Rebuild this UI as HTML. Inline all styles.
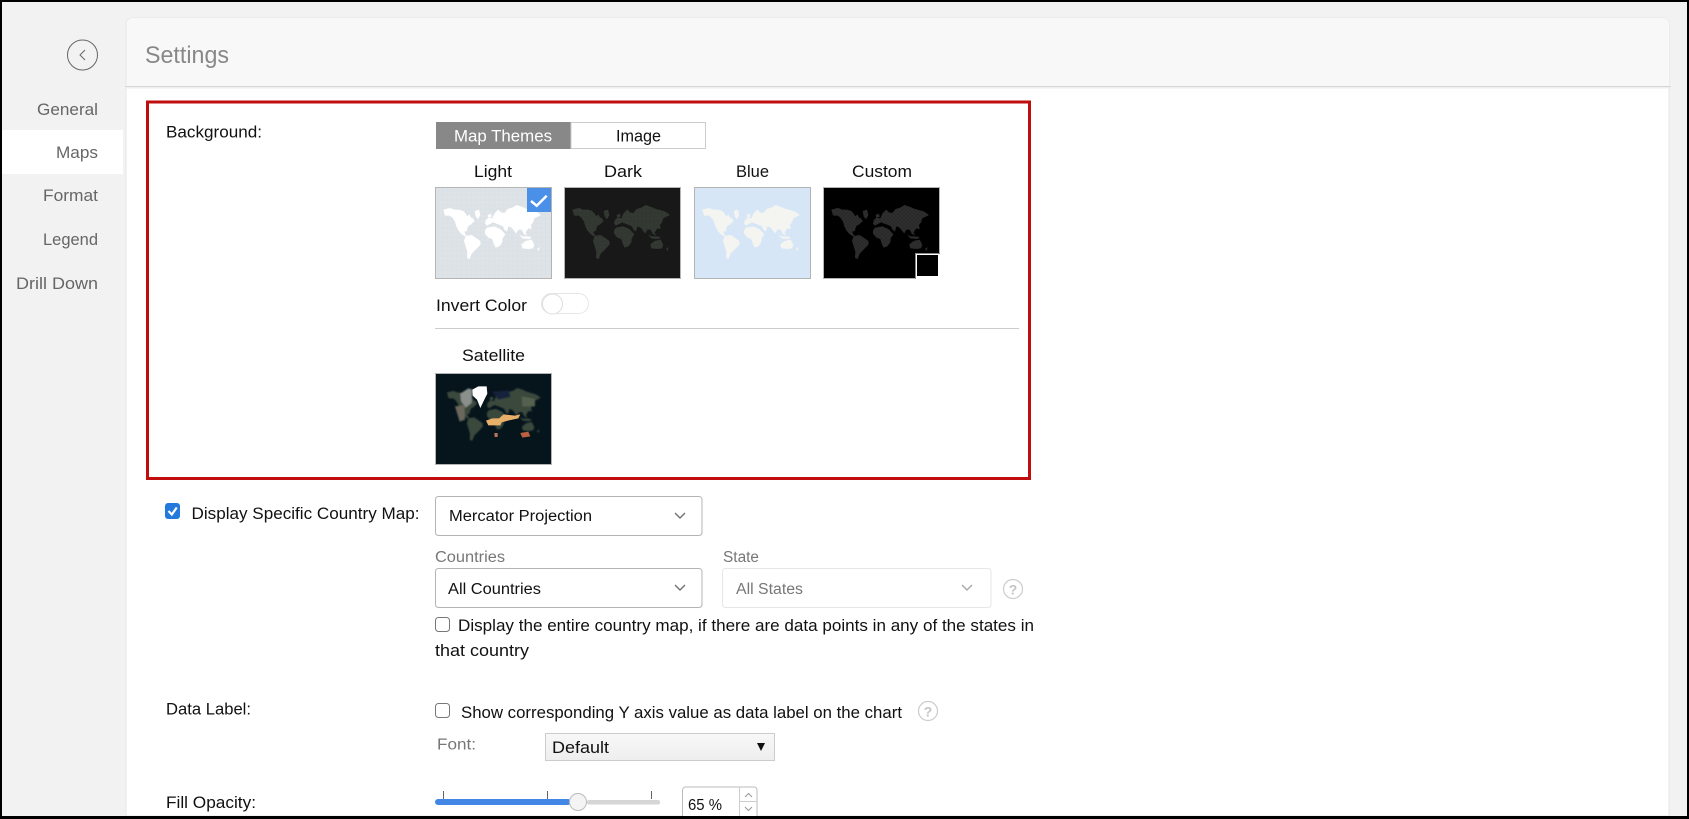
<!DOCTYPE html>
<html lang="en"><head><meta charset="utf-8"><title>Settings</title>
<style>
html,body{margin:0;padding:0;background:#000;overflow:hidden;width:1689px;height:819px}
svg{display:block}
text{font-family:"Liberation Sans",sans-serif;font-size:16.5px;fill:#111}
.s{fill:#666;font-size:17px}
.g{fill:#777;font-size:15.5px}
</style></head><body>
<svg width="1689" height="819" viewBox="0 0 1689 819" xmlns="http://www.w3.org/2000/svg">
<defs>
<g id="land">
<path d="M25,68 L32,66 L45,63 L58,68 L72,68 L85,72 L92,80 L97,88 L103,82 L108,92 L114,94 L119,103 L112,108 L108,113 L101,116 L97,124 L96,132 L88,134 L91,142 L96,148 L88,147 L78,140 L70,130 L64,118 L60,104 L52,92 L44,86 L30,86 Z"/>
<path d="M119,72 L132,68 L136,84 L129,97 L122,88 Z"/>
<path d="M92,147 L110,144 L122,152 L136,162 L137,172 L128,182 L118,192 L110,200 L104,216 L96,213 L97,194 L92,178 L87,162 Z"/>
<path d="M156,122 L178,118 L196,126 L206,136 L211,142 L203,154 L202,166 L193,178 L182,182 L176,170 L172,156 L160,152 L150,140 L150,130 Z"/>
<path d="M152,100 L160,92 L172,94 L178,80 L190,68 L198,76 L208,78 L218,66 L232,62 L245,54 L262,60 L276,66 L292,70 L304,74 L318,84 L306,90 L298,94 L294,106 L288,114 L290,126 L280,124 L272,136 L276,146 L266,140 L260,128 L250,128 L244,140 L236,130 L230,122 L220,118 L216,134 L208,128 L204,118 L190,112 L174,106 L156,116 L150,110 Z"/>
<path d="M259,172 L272,162 L280,160 L290,158 L298,174 L294,184 L280,186 L262,184 Z"/>
<path d="M252,142 L262,148 L276,148 L290,150 L284,156 L262,154 Z"/>
<path d="M306,186 L314,180 L311,192 Z"/>
<path d="M158,84 L168,80 L170,90 L160,92 Z"/>
</g>
<pattern id="dd" width="8" height="8" patternUnits="userSpaceOnUse"><circle cx="2" cy="2" r="1" fill="#4c584a"/><circle cx="6" cy="6" r="1" fill="#4c584a"/></pattern>
<pattern id="dc" width="12" height="12" patternUnits="userSpaceOnUse"><circle cx="3" cy="3" r="1.6" fill="#181818"/><circle cx="9" cy="9" r="1.6" fill="#181818"/></pattern>
<pattern id="dl" width="14" height="14" patternUnits="userSpaceOnUse"><circle cx="3" cy="4" r="1.5" fill="#eef1f4"/><circle cx="10" cy="11" r="1.5" fill="#cfd8e6"/></pattern>
<linearGradient id="nat" x1="0" y1="0" x2="0" y2="1"><stop offset="0" stop-color="#f8f8f8"/><stop offset="1" stop-color="#eeeeee"/></linearGradient>
<filter id="bl" x="-10%" y="-10%" width="120%" height="120%"><feGaussianBlur stdDeviation="2.400"/></filter>
<filter id="bs" x="-10%" y="-10%" width="120%" height="120%"><feGaussianBlur stdDeviation="1"/></filter>
</defs>

<!-- frame + page bg -->
<rect x="0" y="0" width="1689" height="819" fill="#000"/>
<rect x="2" y="2" width="1685" height="814" fill="#f2f2f2"/>

<!-- sidebar -->
<rect x="2" y="130" width="121" height="44" fill="#fff"/>
<circle cx="82.5" cy="55" r="15" fill="none" stroke="#666" stroke-width="1"/>
<polyline points="85,50 80,55 85,60" fill="none" stroke="#666" stroke-width="1"/>
<text class="s" x="37" y="115" textLength="61" lengthAdjust="spacingAndGlyphs">General</text>
<text class="s" x="56" y="158" textLength="42" lengthAdjust="spacingAndGlyphs">Maps</text>
<text class="s" x="43" y="201" textLength="55" lengthAdjust="spacingAndGlyphs">Format</text>
<text class="s" x="43" y="245" textLength="55" lengthAdjust="spacingAndGlyphs">Legend</text>
<text class="s" x="16" y="289" textLength="82" lengthAdjust="spacingAndGlyphs">Drill Down</text>

<!-- card -->
<path d="M126,816 V24 a6,6 0 0 1 6,-6 H1663 a6,6 0 0 1 6,6 V816 Z" fill="#fff" stroke="#e6e6e6" stroke-width="1"/>
<path d="M126.500,86 V24 a6,6 0 0 1 6,-6 H1663 a6,6 0 0 1 6,6 V86 Z" fill="#f8f8f8"/>
<rect x="125" y="86" width="1546" height="1" fill="#d6d6d6"/>
<rect x="125" y="87" width="1546" height="1.500" fill="#eeeeee"/>
<text x="145" y="63" style="fill:#888;font-size:24px" textLength="84" lengthAdjust="spacingAndGlyphs">Settings</text>

<!-- red box -->
<rect x="147.500" y="102" width="882" height="376.500" fill="#fff" stroke="#c00d0d" stroke-width="3"/>

<text x="166" y="137.500" textLength="96" lengthAdjust="spacingAndGlyphs">Background:</text>

<!-- tabs -->
<rect x="436" y="122" width="135" height="27" fill="#888"/>
<rect x="571" y="122.500" width="134.500" height="26" fill="#fff" stroke="#ccc"/>
<text x="454" y="141.500" style="fill:#fff" textLength="98" lengthAdjust="spacingAndGlyphs">Map Themes</text>
<text x="616" y="141.500" textLength="45" lengthAdjust="spacingAndGlyphs">Image</text>

<text x="474" y="177" textLength="38" lengthAdjust="spacingAndGlyphs">Light</text>
<text x="604" y="177" textLength="38" lengthAdjust="spacingAndGlyphs">Dark</text>
<text x="736" y="177" textLength="33" lengthAdjust="spacingAndGlyphs">Blue</text>
<text x="852" y="177" textLength="60" lengthAdjust="spacingAndGlyphs">Custom</text>

<!-- Light -->
<rect x="435.500" y="187.500" width="116" height="91" fill="#dde2e7" stroke="#b4b4b4"/>
<g transform="translate(435,187) scale(.3333)"><rect x="3" y="3" width="345" height="270" fill="url(#dl)" opacity=".6"/><use href="#land" fill="#fff"/></g>
<rect x="527" y="188" width="24" height="24" fill="#4a90e8"/>
<polyline points="531,201 536.700,205.700 546.700,195.700" fill="none" stroke="#fff" stroke-width="2.500"/>

<!-- Dark -->
<rect x="564.500" y="187.500" width="116" height="91" fill="#181818" stroke="#b4b4b4"/>
<g transform="translate(564,187) scale(.3333)"><use href="#land" fill="#30352f"/><use href="#land" fill="url(#dd)"/></g>

<!-- Blue -->
<rect x="694.500" y="187.500" width="116" height="91" fill="#d6e6f7" stroke="#b4b4b4"/>
<g transform="translate(694,187) scale(.3333)"><use href="#land" fill="#f4f4f0"/></g>

<!-- Custom -->
<rect x="823.500" y="187.500" width="116" height="91" fill="#000" stroke="#b4b4b4"/>
<g transform="translate(823,187) scale(.3333)"><use href="#land" fill="#2e2e2e"/><use href="#land" fill="url(#dc)"/></g>
<rect x="915" y="253" width="25" height="26" fill="#fff"/>
<rect x="915" y="253" width="1" height="26" fill="#888"/>
<rect x="915" y="253" width="25" height="1" fill="#888"/>
<rect x="917" y="255" width="21" height="21" fill="#000"/>

<!-- Invert -->
<text x="436" y="311" textLength="91" lengthAdjust="spacingAndGlyphs">Invert Color</text>
<rect x="541.500" y="293.500" width="47" height="20" rx="10" fill="#fff" stroke="#e6e6e6"/>
<circle cx="552.500" cy="304" r="10" fill="#fff" stroke="#dcdcdc"/>
<rect x="435" y="328" width="584" height="1" fill="#ccc"/>

<!-- Satellite -->
<text x="462" y="361" textLength="63" lengthAdjust="spacingAndGlyphs">Satellite</text>
<rect x="435.500" y="373.500" width="116" height="91" fill="#06141c" stroke="#b4b4b4"/>
<g transform="translate(435,373) scale(.3333)">
<g filter="url(#bl)">
<use href="#land" fill="#3a4a3c" transform="translate(12,-8) scale(.96,.98)"/>
<path d="M76,62 L100,46 L112,50 L110,90 L92,104 L78,84 Z" fill="#8b908c"/>
<path d="M60,100 L88,96 L90,140 L74,146 Z" fill="#6b685c"/>
<path d="M172,56 L222,52 L226,72 L190,80 Z" fill="#16223a"/>
<path d="M260,70 L300,78 L300,100 L262,100 Z" fill="#55604f"/>
</g>
<g filter="url(#bs)">
<path d="M112,50 L130,40 L155,40 L157,62 L146,84 L136,105 L126,80 L113,68 Z" fill="#fff"/>
<path d="M153,143 L172,136 L192,136 L206,124 L240,128 L256,124 L250,136 L222,142 L200,148 L196,157 L160,157 Z" fill="#e9b06a"/>
<path d="M178,180 L188,180 L188,192 L179,192 Z" fill="#b97358"/>
<path d="M256,180 L280,176 L286,190 L262,194 Z" fill="#bb6040"/>
</g>
</g>

<!-- Display Specific -->
<rect x="165" y="503" width="15" height="16" rx="3" fill="#2479dc"/>
<polyline points="168.500,511 171.800,514.500 176.800,507.500" fill="none" stroke="#fff" stroke-width="2.200"/>
<text x="191.500" y="519" textLength="228" lengthAdjust="spacingAndGlyphs">Display Specific Country Map:</text>

<rect x="435.500" y="496.500" width="266.500" height="39" rx="3" fill="#fff" stroke="#b4b4b4"/>
<text x="449" y="521" style="font-size:15.500px" textLength="143" lengthAdjust="spacingAndGlyphs">Mercator Projection</text>
<polyline points="675,513 680,518 685,513" fill="none" stroke="#777" stroke-width="1.500"/>

<text class="g" x="435" y="562" textLength="70" lengthAdjust="spacingAndGlyphs">Countries</text>
<rect x="435.500" y="568.500" width="266.500" height="39" rx="3" fill="#fff" stroke="#b4b4b4"/>
<text x="448" y="594" style="font-size:15.500px" textLength="93" lengthAdjust="spacingAndGlyphs">All Countries</text>
<polyline points="675,585 680,590 685,585" fill="none" stroke="#777" stroke-width="1.500"/>

<text class="g" x="723" y="562" textLength="36" lengthAdjust="spacingAndGlyphs">State</text>
<rect x="722.500" y="568.500" width="268.500" height="39" rx="3" fill="#fff" stroke="#e6e6e6"/>
<text x="736" y="594" style="font-size:15.500px;fill:#777" textLength="67" lengthAdjust="spacingAndGlyphs">All States</text>
<polyline points="962,585 967,590 972,585" fill="none" stroke="#aaa" stroke-width="1.500"/>

<circle cx="1013" cy="589" r="9.500" fill="#fff" stroke="#ccc" stroke-width="1.200"/>
<text x="1013" y="594.500" text-anchor="middle" style="font-size:14px;font-weight:bold;fill:#c4c4c4">?</text>

<rect x="435.500" y="617.500" width="14" height="14" rx="3" fill="#fff" stroke="#777"/>
<text x="458" y="631" textLength="576" lengthAdjust="spacingAndGlyphs">Display the entire country map, if there are data points in any of the states in</text>
<text x="435" y="656" textLength="94" lengthAdjust="spacingAndGlyphs">that country</text>

<!-- Data Label -->
<text x="166" y="714.500" textLength="85" lengthAdjust="spacingAndGlyphs">Data Label:</text>
<rect x="435.500" y="703.500" width="14" height="14" rx="3" fill="#fff" stroke="#777"/>
<text x="461" y="718" textLength="441" lengthAdjust="spacingAndGlyphs">Show corresponding Y axis value as data label on the chart</text>
<circle cx="928" cy="711" r="9.500" fill="#fff" stroke="#ccc" stroke-width="1.200"/>
<text x="928" y="716.500" text-anchor="middle" style="font-size:14px;font-weight:bold;fill:#c4c4c4">?</text>

<text class="g" x="437" y="749.500" textLength="39" lengthAdjust="spacingAndGlyphs">Font:</text>
<rect x="545.500" y="733.500" width="229" height="27" fill="url(#nat)" stroke="#ccc"/>
<text x="552" y="753" textLength="57" lengthAdjust="spacingAndGlyphs">Default</text>
<polygon points="757,743 765,743 761,751" fill="#111"/>

<!-- Fill Opacity -->
<text x="166" y="808" textLength="90" lengthAdjust="spacingAndGlyphs">Fill Opacity:</text>
<rect x="587" y="800" width="73" height="4.500" rx="2" fill="#d6d6d6"/>
<rect x="435" y="799" width="136" height="6" rx="3" fill="#4287e6"/>
<rect x="443" y="791" width="1" height="8" fill="#666"/>
<rect x="547" y="791" width="1" height="8" fill="#666"/>
<rect x="651" y="791" width="1" height="8" fill="#666"/>
<circle cx="578" cy="802" r="8.500" fill="#f4f4f4" stroke="#bbb"/>

<rect x="682.500" y="787" width="74.500" height="40" rx="3" fill="#fff" stroke="#bbb"/>
<rect x="739" y="787" width="1" height="30" fill="#ccc"/>
<rect x="739" y="801" width="18" height="1" fill="#ccc"/>
<text x="688" y="810" style="font-size:15.500px" textLength="34" lengthAdjust="spacingAndGlyphs">65 %</text>
<polyline points="745,797 748.500,793.500 752,797" fill="none" stroke="#999"/>
<polyline points="745,807 748.500,810.500 752,807" fill="none" stroke="#999"/>

<!-- bottom frame -->
<rect x="0" y="816" width="1689" height="3" fill="#000"/>
</svg>
</body></html>
